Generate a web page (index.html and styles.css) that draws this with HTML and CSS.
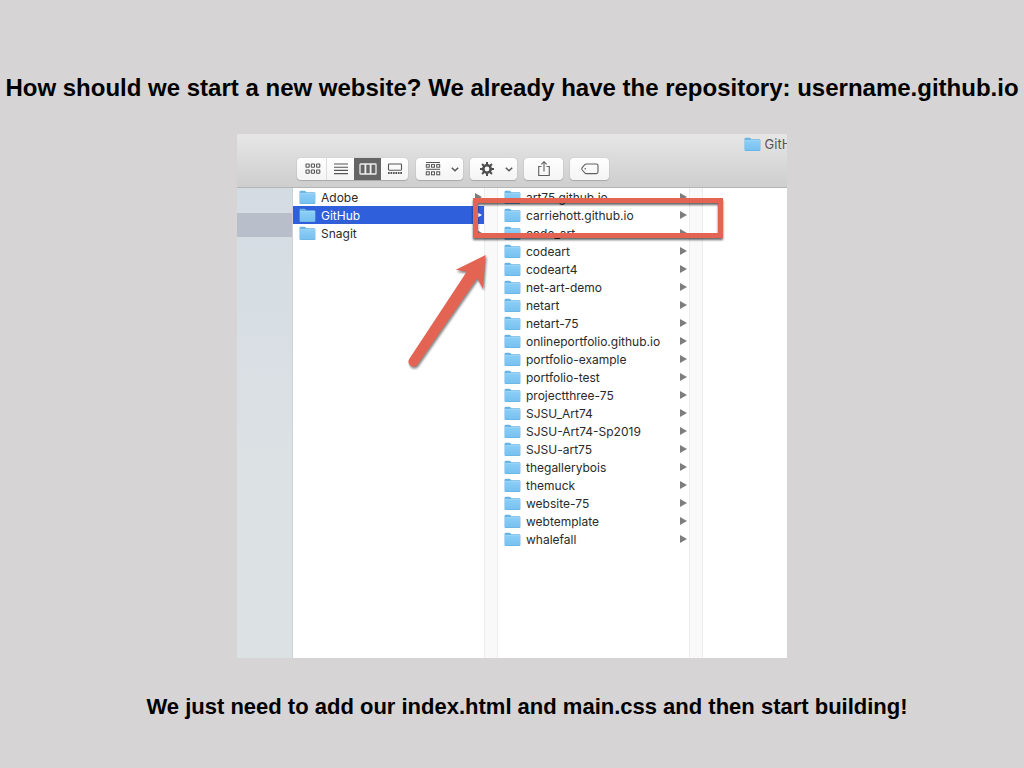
FILE: index.html
```html
<!DOCTYPE html>
<html lang="en">
<head>
<meta charset="utf-8">
<meta name="viewport" content="width=device-width, initial-scale=1">
<title>Starting a new website</title>
<link rel="stylesheet" href="styles.css">
</head>
<body>
<svg class="defs" aria-hidden="true">
  <defs>
    <linearGradient id="fill" x1="0" y1="0" x2="0" y2="1"><stop offset="0" stop-color="#8dcff7"/><stop offset="1" stop-color="#77c0f0"/></linearGradient>
    <symbol id="folder" viewBox="0 0 17 15">
      <path d="M.5 2Q.5.8 1.7.8H5.4Q6.2.8 6.8 1.5L7.3 2.2H15.3Q16.4 2.2 16.4 3.3V13Q16.4 14 15.3 14H1.7Q.5 14 .5 13Z" fill="#6ab4e2"/>
      <path d="M1 3H16V12.8Q16 13.3 15.3 13.3H1.7Q1 13.3 1 12.8Z" fill="url(#fill)"/>
      <path d="M1 3.4H16" stroke="#9bd6f8" stroke-width=".8"/>
    </symbol>
  </defs>
</svg>
<main class="slide">
  <h1 class="heading">How should we start a new website? We already have the repository: username.github.io</h1>
  <section class="finder" aria-label="Finder window">
    <header class="toolbar">
      <div class="window-title"><svg class="folder"><use href="#folder"/></svg><span>GitHub</span></div>
      <div class="tools">
        <div class="views">
          <button class="view" aria-label="Icons"><svg width="16" height="12" viewBox="0 0 16 12" fill="none" stroke="#555" stroke-width="1.1"><rect x="1" y="1" width="3.2" height="3.2" rx=".5"/><rect x="6.3" y="1" width="3.2" height="3.2" rx=".5"/><rect x="11.6" y="1" width="3.2" height="3.2" rx=".5"/><rect x="1" y="7" width="3.2" height="3.2" rx=".5"/><rect x="6.3" y="7" width="3.2" height="3.2" rx=".5"/><rect x="11.6" y="7" width="3.2" height="3.2" rx=".5"/></svg></button>
          <button class="view" aria-label="List"><svg width="16" height="12" viewBox="0 0 16 12" stroke="#555" stroke-width="1.1"><path d="M1 1H15M1 4.2H15M1 7.4H15M1 10.6H15"/></svg></button>
          <button class="view active" aria-label="Columns" aria-pressed="true"><svg width="18" height="12" viewBox="0 0 18 12" fill="none" stroke="#eee" stroke-width="1.3"><rect x="1" y="1" width="16" height="10" rx=".6"/><path d="M6.4 1V11M11.6 1V11" stroke-width="1.8"/></svg></button>
          <button class="view" aria-label="Gallery"><svg width="16" height="12" viewBox="0 0 16 12" fill="none" stroke="#555" stroke-width="1.1"><rect x="1.5" y="1" width="13" height="6.2" rx=".6"/><path d="M1 10H15" stroke-width="2" stroke-dasharray="1.7 .76"/></svg></button>
        </div>
        <button class="tool wide" aria-label="Group"><svg width="16" height="16" viewBox="0 0 16 16" fill="none" stroke="#555"><path d="M1 1.5H15M1 8.3H15"/><rect x="1.3" y="3.6" width="3" height="2.6"/><rect x="6.5" y="3.6" width="3" height="2.6"/><rect x="11.7" y="3.6" width="3" height="2.6"/><rect x="1.3" y="10.8" width="3" height="3"/><rect x="6.5" y="10.8" width="3" height="3"/><rect x="11.7" y="10.8" width="3" height="3"/></svg><svg width="8" height="5" viewBox="0 0 8 5" fill="none" stroke="#555" stroke-width="1.5"><path d="M.8.8L4 3.7L7.2.8"/></svg></button>
        <button class="tool wide" aria-label="Actions"><svg width="16" height="16" viewBox="0 0 16 16" stroke="#4f4f4f"><circle cx="8" cy="8" r="3.7" fill="none" stroke-width="2.6"/><path d="M8 1V4M8 12V15M1 8H4M12 8H15M3.05 3.05L5.2 5.2M10.8 10.8L12.95 12.95M3.05 12.95L5.2 10.8M10.8 5.2L12.95 3.05" stroke-width="2"/></svg><svg width="8" height="5" viewBox="0 0 8 5" fill="none" stroke="#555" stroke-width="1.5"><path d="M.8.8L4 3.7L7.2.8"/></svg></button>
        <button class="tool" aria-label="Share"><svg width="14" height="18" viewBox="0 0 14 18" fill="none" stroke="#606060" stroke-width="1.1"><path d="M4.5 6.5H1.7V15.5H12.3V6.5H9.5M7 11.5V1.8M4.3 4.4L7 1.7L9.7 4.4"/></svg></button>
        <button class="tool" aria-label="Tags"><svg width="18" height="12" viewBox="0 0 18 12" fill="none" stroke="#606060" stroke-width="1.1"><path d="M5.2 1H15.4Q17 1 17 2.6V9Q17 10.6 15.4 10.6H5.2Q4.4 10.6 3.8 9.9L1.2 7Q.4 5.8 1.2 4.6L3.8 1.7Q4.4 1 5.2 1Z"/><circle cx="4.2" cy="5.8" r=".8" fill="#606060" stroke="none"/></svg></button>
      </div>
    </header>
    <div class="panes">
      <div class="sidebar"><div class="sidebar-selection"></div></div>
      <ul class="column">
        <li><a class="row" href="#"><svg class="folder"><use href="#folder"/></svg><span>Adobe</span></a></li>
        <li><a class="row selected" href="#"><svg class="folder"><use href="#folder"/></svg><span>GitHub</span></a></li>
        <li><a class="row" href="#"><svg class="folder"><use href="#folder"/></svg><span>Snagit</span></a></li>
      </ul>
      <div class="gutter"></div>
      <ul class="column">
        <li><a class="row" href="#"><svg class="folder"><use href="#folder"/></svg><span>art75.github.io</span></a></li>
        <li><a class="row" href="#"><svg class="folder"><use href="#folder"/></svg><span>carriehott.github.io</span></a></li>
        <li><a class="row" href="#"><svg class="folder"><use href="#folder"/></svg><span>code_art</span></a></li>
        <li><a class="row" href="#"><svg class="folder"><use href="#folder"/></svg><span>codeart</span></a></li>
        <li><a class="row" href="#"><svg class="folder"><use href="#folder"/></svg><span>codeart4</span></a></li>
        <li><a class="row" href="#"><svg class="folder"><use href="#folder"/></svg><span>net-art-demo</span></a></li>
        <li><a class="row" href="#"><svg class="folder"><use href="#folder"/></svg><span>netart</span></a></li>
        <li><a class="row" href="#"><svg class="folder"><use href="#folder"/></svg><span>netart-75</span></a></li>
        <li><a class="row" href="#"><svg class="folder"><use href="#folder"/></svg><span>onlineportfolio.github.io</span></a></li>
        <li><a class="row" href="#"><svg class="folder"><use href="#folder"/></svg><span>portfolio-example</span></a></li>
        <li><a class="row" href="#"><svg class="folder"><use href="#folder"/></svg><span>portfolio-test</span></a></li>
        <li><a class="row" href="#"><svg class="folder"><use href="#folder"/></svg><span>projectthree-75</span></a></li>
        <li><a class="row" href="#"><svg class="folder"><use href="#folder"/></svg><span>SJSU_Art74</span></a></li>
        <li><a class="row" href="#"><svg class="folder"><use href="#folder"/></svg><span>SJSU-Art74-Sp2019</span></a></li>
        <li><a class="row" href="#"><svg class="folder"><use href="#folder"/></svg><span>SJSU-art75</span></a></li>
        <li><a class="row" href="#"><svg class="folder"><use href="#folder"/></svg><span>thegallerybois</span></a></li>
        <li><a class="row" href="#"><svg class="folder"><use href="#folder"/></svg><span>themuck</span></a></li>
        <li><a class="row" href="#"><svg class="folder"><use href="#folder"/></svg><span>website-75</span></a></li>
        <li><a class="row" href="#"><svg class="folder"><use href="#folder"/></svg><span>webtemplate</span></a></li>
        <li><a class="row" href="#"><svg class="folder"><use href="#folder"/></svg><span>whalefall</span></a></li>
      </ul>
      <div class="gutter"></div>
      <div class="preview"></div>
    </div>
    <div class="callout"></div>
    <svg class="arrow" viewBox="0 0 90 124" aria-hidden="true"><path d="M80.7 5L50.7 19.7L61.7 21.7L4.2 109A4.8 4.8 0 0 0 12.8 114.3L72.3 28.3L78 39Z" fill="#e36453"/></svg>
  </section>
  <p class="footnote">We just need to add our index.html and main.css and then start building!</p>
</main>
</body>
</html>
```
FILE: styles.css
```css
* { box-sizing: border-box; }

body {
  margin: 0;
  background: #d6d4d5;
  color: #000;
  font-family: "Liberation Sans", Arial, sans-serif;
}

.defs { position: absolute; width: 0; height: 0; }

.slide {
  display: flex;
  flex-direction: column;
  align-items: center;
  padding: 74px 4px 40px;
}

.heading {
  margin: 0 0 32px;
  font-size: 24px;
  line-height: 28px;
  text-align: center;
}

.footnote {
  margin: 35px 0 0;
  padding-left: 30px;
  font-size: 22px;
  font-weight: bold;
  line-height: 28px;
  text-align: center;
}

.finder {
  position: relative;
  width: 100%;
  max-width: 550px;
  background: #fff;
  color: #333;
  font-family: Inter, "Open Sans", sans-serif;
  font-size: 12px;
}

.toolbar {
  overflow: hidden;
  border-bottom: 1px solid #b5b5b5;
  background: linear-gradient(#e6e6e6, #cecece);
}

.window-title {
  display: flex;
  justify-content: flex-end;
  gap: 4px;
  height: 20px;
  margin-right: -20px;
  align-items: center;
  color: #555;
  font-size: 13px;
}

.folder { flex: none; width: 17px; height: 15px; }

.tools {
  display: flex;
  gap: 7px;
  padding: 4px 0 7px 60px;
}

.views {
  display: flex;
  margin-right: 1px;
  border-radius: 4px;
  background: linear-gradient(#fff, #f4f4f4);
  box-shadow: 0 0 1px #999, 0 1px 1px #aaa;
}

.view, .tool {
  display: flex;
  align-items: center;
  justify-content: center;
  height: 22px;
  padding: 0;
  border: 0;
  background: none;
}

.view { width: 27px; }
.view:first-child { width: 30px; padding-left: 2px; border-right: 1px solid #ddd; }
.view.active { background: #656565; }

.tool {
  width: 39px;
  border-radius: 4px;
  background: linear-gradient(#fff, #f4f4f4);
  box-shadow: 0 0 1px #999, 0 1px 1px #aaa;
}

.tool.wide { width: 47px; gap: 10px; padding-left: 4px; }

.panes { display: flex; }

.sidebar {
  flex: none;
  width: 56px;
  padding-top: 25px;
  border-right: 1px solid #cdd2d6;
  background: linear-gradient(#d4dce3, #dce1e4 60%);
}

.sidebar-selection { height: 24px; background: #b8bfca; }

.column {
  flex: 0 1 191px;
  min-width: 0;
  margin: 0;
  padding: 0 0 110px;
  list-style: none;
}

.row {
  display: flex;
  align-items: center;
  gap: 5px;
  height: 18px;
  padding: 0 2px 0 6px;
  color: #2a2a2a;
  text-decoration: none;
  white-space: nowrap;
}

.row::after {
  content: "";
  margin-left: auto;
  border-left: 7px solid #7d7d7d;
  border-top: 4px solid transparent;
  border-bottom: 4px solid transparent;
}

.row.selected { background: #2f5fdb; color: #fff; }
.row.selected::after { border-left-color: #fff; }

.gutter {
  flex: none;
  width: 14px;
  border: solid #ededed;
  border-width: 0 1px;
  background: #f9f9f9;
}

.preview { flex: 1; }

.callout {
  position: absolute;
  left: 236px;
  top: 64px;
  width: 250px;
  height: 40px;
  border: 5px solid #e36453;
  filter: drop-shadow(0 2px 1px #0009);
}

.arrow {
  position: absolute;
  left: 168px;
  top: 116px;
  width: 90px;
  height: 124px;
  filter: drop-shadow(1px 2px 1px #0007);
}
```
